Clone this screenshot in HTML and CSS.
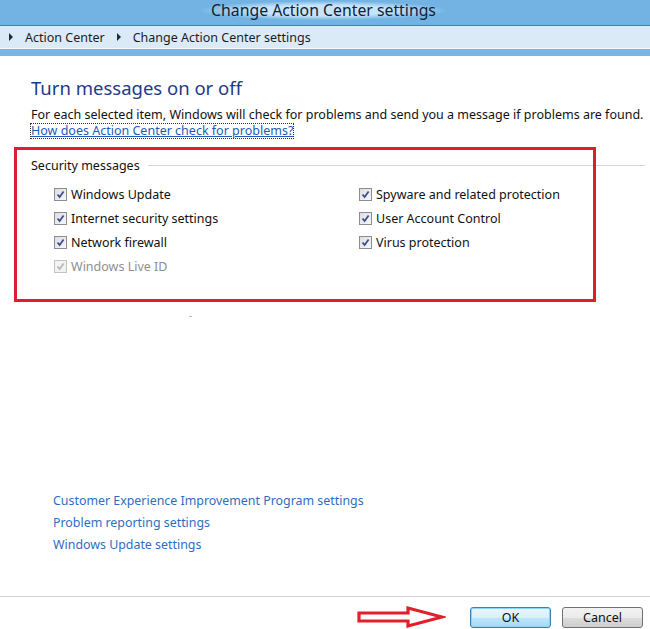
FILE: index.html
```html
<!DOCTYPE html>
<html>
<head>
<meta charset="utf-8">
<link rel="stylesheet" href="styles.css">
</head>
<body>
<div class="window">
  <header class="titlebar"><span class="title">Change Action Center settings</span></header>
  <nav class="crumbs">
    <span class="tri"></span><span class="crumb">Action Center</span>
    <span class="tri"></span><span class="crumb">Change Action Center settings</span>
  </nav>
  <div class="band"></div>
  <main class="content">
    <h1 class="heading">Turn messages on or off</h1>
    <p class="desc">For each selected item, Windows will check for problems and send you a message if problems are found.</p>
    <a class="help" href="#">How does Action Center check for problems?</a>
    <section class="group">
      <div class="legend"><span class="legend-text">Security messages</span><span class="legend-line"></span></div>
      <div class="grid">
        <div class="col">
          <label class="item"><span class="cb"><svg viewBox="0 0 9 9"><path d="M1.5 4.5 L3.6 7 L7.6 1.5" /></svg></span>Windows Update</label>
          <label class="item"><span class="cb"><svg viewBox="0 0 9 9"><path d="M1.5 4.5 L3.6 7 L7.6 1.5" /></svg></span>Internet security settings</label>
          <label class="item"><span class="cb"><svg viewBox="0 0 9 9"><path d="M1.5 4.5 L3.6 7 L7.6 1.5" /></svg></span>Network firewall</label>
          <label class="item disabled"><span class="cb"><svg viewBox="0 0 9 9"><path d="M1.5 4.5 L3.6 7 L7.6 1.5" /></svg></span>Windows Live ID</label>
        </div>
        <div class="col">
          <label class="item"><span class="cb"><svg viewBox="0 0 9 9"><path d="M1.5 4.5 L3.6 7 L7.6 1.5" /></svg></span>Spyware and related protection</label>
          <label class="item"><span class="cb"><svg viewBox="0 0 9 9"><path d="M1.5 4.5 L3.6 7 L7.6 1.5" /></svg></span>User Account Control</label>
          <label class="item"><span class="cb"><svg viewBox="0 0 9 9"><path d="M1.5 4.5 L3.6 7 L7.6 1.5" /></svg></span>Virus protection</label>
        </div>
      </div>
      <div class="annot-box"></div>
    </section>
    <span class="speck"></span>
  </main>
  <div class="links">
    <a href="#">Customer Experience Improvement Program settings</a>
    <a href="#">Problem reporting settings</a>
    <a href="#">Windows Update settings</a>
  </div>
  <footer class="footer">
    <svg class="annot-arrow" viewBox="0 0 90 24" width="90" height="24">
      <path d="M3 8 H52 V3 L86 12 L52 21 V16 H3 Z" fill="none" stroke="#e0202a" stroke-width="3.2" stroke-linejoin="miter"/>
    </svg>
    <button class="btn primary">OK</button>
    <button class="btn">Cancel</button>
  </footer>
</div>
</body>
</html>
```
FILE: styles.css
```css
* { box-sizing: border-box; }
html, body { margin: 0; padding: 0; background: #fff; }
body {
  width: 650px; height: 629px; overflow: hidden;
  font-family: "Noto Sans", "Open Sans", sans-serif;
  color: #1b1b1b;
}
.window { display: flex; flex-direction: column; height: 629px; }

.titlebar {
  height: 26px; background: #72b3e3;
  display: flex; justify-content: center; align-items: center;
  padding-bottom: 4px;
  border-bottom: 1px solid #3f7fb6;
}
.title {
  font-size: 15.8px; line-height: 19px; color: #10213a; padding: 0 10px; margin-left: -3px;
  background: radial-gradient(ellipse at center, rgba(214,236,251,0.85) 40%, rgba(214,236,251,0) 72%);
}

.crumbs {
  height: 23px; background: #dbeaf7;
  display: flex; align-items: center; padding-left: 9px;
  font-size: 12.5px; color: #1c1c1c;
  border-bottom: 1px solid #f4f9fd;
}
.tri {
  width: 0; height: 0; border-left: 4px solid #2a2a2a;
  border-top: 4px solid transparent; border-bottom: 4px solid transparent;
  margin-right: 12px;
}
.crumb { margin-right: 12px; }

.band { height: 7px; background: #78b6e5; }

.content { position: relative; padding: 0 0 0 31px; flex: 1; }
.heading {
  margin: 20px 0 0; font-weight: normal; font-size: 18.5px; color: #1e3a8a; line-height: 24px;
}
.desc { margin: 7px 0 0; font-size: 12.5px; line-height: 16px; color: #111; white-space: nowrap; }
.help {
  display: block; width: fit-content; font-size: 12.5px; line-height: 14px; color: #1f5bb5;
  outline: 1px dotted #333; outline-offset: 0; text-decoration: underline; margin-top: 1px;
}

.group { position: relative; margin-top: 19px; }
.legend { display: flex; align-items: center; height: 16px; }
.legend-text { font-size: 12.5px; color: #111; margin-right: 8px; }
.legend-line { flex: 1; height: 1px; background: #d6d6d6; margin-right: 5px; }

.grid { display: grid; grid-template-columns: 305px 1fr; padding-left: 23px; margin-top: 13px; }
.col { display: flex; flex-direction: column; gap: 8px; }
.item { display: flex; align-items: center; height: 16px; font-size: 12.5px; color: #111; gap: 4px; }
.item.disabled { color: #8f8f8f; }
.cb {
  width: 13px; height: 13px; border: 1px solid #8a8e93;
  background: linear-gradient(135deg, #dcdfe3, #f6f7f8);
  display: flex; align-items: center; justify-content: center;
}
.cb svg { width: 9px; height: 9px; }
.cb path { fill: none; stroke: #3d4f8e; stroke-width: 1.8; }
.disabled .cb { border-color: #c3c3c3; background: #f2f2f2; }
.disabled .cb path { stroke: #b8b8b8; }

.annot-box {
  position: absolute; left: -17px; top: -10px; width: 582px; height: 155px;
  border: 3px solid #d9212c;
}
.speck { position: absolute; left: 189px; top: 260px; width: 3px; height: 1px; background: #bbb; }

.links { display: flex; flex-direction: column; padding-left: 53px; gap: 5px; margin-bottom: 43px; }
.links a { font-size: 12.4px; line-height: 17px; color: #2d6ec4; text-decoration: none; }

.footer {
  height: 33px; border-top: 1px solid #d3d3d3;
  display: flex; justify-content: flex-end; align-items: flex-start;
  padding-right: 7px; gap: 11px; position: relative;
}
.annot-arrow { position: absolute; left: 356px; top: 8px; }
.btn {
  width: 81px; height: 21px; font-family: inherit; font-size: 12.5px; color: #111;
  border: 1px solid #707070; border-radius: 3px;
  background: linear-gradient(#f2f2f2 0%, #ebebeb 50%, #dddddd 51%, #cfcfcf 100%);
  padding: 0; margin-top: 10px;
}
.btn.primary {
  border-color: #3c7fb1;
  background: linear-gradient(#eaf6fd 0%, #d9f0fc 50%, #bee6fd 51%, #a7d9f5 100%);
  box-shadow: inset 0 0 0 1px #8fd2f7;
}
```
